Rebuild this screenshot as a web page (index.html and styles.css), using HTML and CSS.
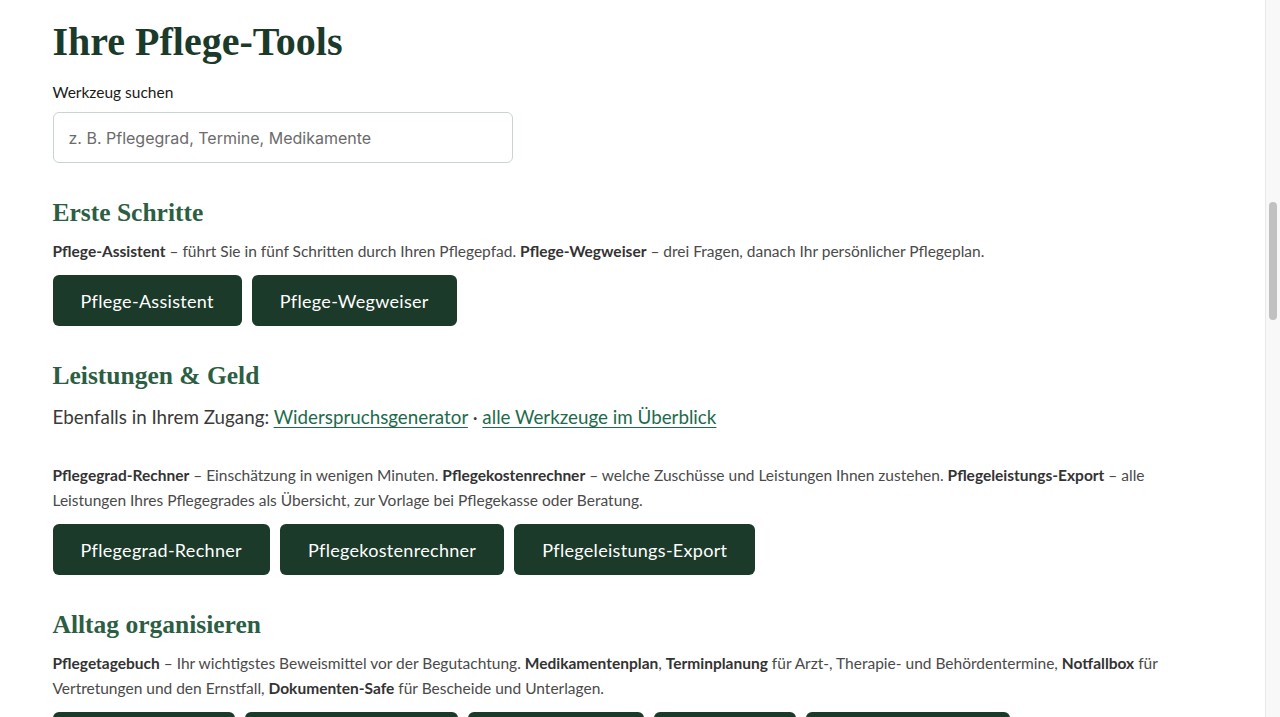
FILE: index.html
```html
<!DOCTYPE html>
<html lang="de">
<head>
<meta charset="utf-8">
<title>Ihre Pflege-Tools</title>
<link rel="stylesheet" href="styles.css">
</head>
<body>
<main class="page">
  <h1 class="title">Ihre Pflege-Tools</h1>
  <label class="search-label" for="tool-search">Werkzeug suchen</label>
  <input class="search-input" id="tool-search" type="search" placeholder="z. B. Pflegegrad, Termine, Medikamente">

  <section class="group">
    <h2 class="group-title">Erste Schritte</h2>
    <p class="group-text"><strong>Pflege-Assistent</strong> – führt Sie in fünf Schritten durch Ihren Pflegepfad. <strong>Pflege-Wegweiser</strong> – drei Fragen, danach Ihr persönlicher Pflegeplan.</p>
    <div class="btn-row">
      <a class="btn" href="#">Pflege-Assistent</a>
      <a class="btn" href="#">Pflege-Wegweiser</a>
    </div>
  </section>

  <section class="group">
    <h2 class="group-title">Leistungen &amp; Geld</h2>
    <p class="also">Ebenfalls in Ihrem Zugang: <a class="link" href="#">Widerspruchsgenerator</a> · <a class="link" href="#">alle Werkzeuge im Überblick</a></p>
    <p class="group-text spaced"><strong>Pflegegrad-Rechner</strong> – Einschätzung in wenigen Minuten. <strong>Pflegekostenrechner</strong> – welche Zuschüsse und Leistungen Ihnen zustehen. <strong>Pflegeleistungs-Export</strong> – alle Leistungen Ihres Pflegegrades als Übersicht, zur Vorlage bei Pflegekasse oder Beratung.</p>
    <div class="btn-row">
      <a class="btn" href="#">Pflegegrad-Rechner</a>
      <a class="btn" href="#">Pflegekostenrechner</a>
      <a class="btn" href="#">Pflegeleistungs-Export</a>
    </div>
  </section>

  <section class="group">
    <h2 class="group-title">Alltag organisieren</h2>
    <p class="group-text"><strong>Pflegetagebuch</strong> – Ihr wichtigstes Beweismittel vor der Begutachtung. <strong>Medikamentenplan</strong>, <strong>Terminplanung</strong> für Arzt-, Therapie- und Behördentermine, <strong>Notfallbox</strong> für Vertretungen und den Ernstfall, <strong>Dokumenten-Safe</strong> für Bescheide und Unterlagen.</p>
    <div class="btn-row">
      <a class="btn" href="#">Pflegetagebuch</a>
      <a class="btn" href="#">Medikamentenplan</a>
      <a class="btn" href="#">Terminplanung</a>
      <a class="btn" href="#">Notfallbox</a>
      <a class="btn" href="#">Dokumenten-Safe</a>
    </div>
  </section>
</main>
<div class="scrollbar" aria-hidden="true"><div class="scroll-thumb"></div></div>
</body>
</html>
```
FILE: styles.css
```css
html, body {
  margin: 0;
  padding: 0;
  background: #ffffff;
}
body {
  padding-right: 15px;
  font-family: "Lato", "Noto Sans", sans-serif;
  color: #444444;
}
.page {
  max-width: 1160px;
  margin: 0 auto;
  padding: 18px 0 60px;
  display: flex;
  flex-direction: column;
  align-items: flex-start;
}
.title {
  margin: 0;
  font-family: "Liberation Serif", serif;
  font-weight: 700;
  font-size: 40px;
  line-height: 48px;
  color: #1b3a2a;
}
.search-label {
  margin-top: 15px;
  font-size: 15.5px;
  line-height: 22px;
  color: #1a1a1a;
}
.search-input {
  margin-top: 9px;
  box-sizing: border-box;
  width: 460px;
  height: 51px;
  padding: 0 15px;
  border: 1px solid #c8d4d0;
  border-radius: 6px;
  font-family: "Inter", "Roboto", sans-serif;
  font-size: 16px;
  color: #222;
  background: #fff;
}
.search-input::placeholder {
  color: #6b6b6b;
}
.group {
  margin-top: 34px;
  display: flex;
  flex-direction: column;
  align-items: flex-start;
}
.group-title {
  margin: 0;
  font-family: "Liberation Serif", serif;
  font-weight: 700;
  font-size: 25.5px;
  line-height: 32px;
  color: #2c5e44;
}
.group-text {
  margin: 10px 0 11px;
  max-width: 1130px;
  font-size: 15.5px;
  line-height: 25px;
  color: #4a4a4a;
}
.group-text strong {
  font-weight: 700;
  color: #333333;
}
.group-text.spaced {
  margin-top: 33px;
}
.also {
  margin: 11px 0 0;
  font-size: 18.8px;
  line-height: 27px;
  color: #3a3a3a;
}
.link {
  color: #1e6a4d;
  text-decoration: underline;
  text-underline-offset: 3px;
}
.btn-row {
  display: flex;
  flex-wrap: wrap;
  gap: 10px;
}
.btn {
  display: inline-flex;
  align-items: center;
  height: 51px;
  padding: 0 28px;
  background: #1b3a2a;
  color: #ffffff;
  border-radius: 6px;
  font-size: 18px;
  letter-spacing: 0.3px;
  text-decoration: none;
}
.scrollbar {
  position: fixed;
  top: 0;
  right: 0;
  bottom: 0;
  width: 14px;
  background: #f8f8f8;
  border-left: 1px solid #e8e8e8;
}
.scroll-thumb {
  position: absolute;
  top: 202px;
  left: 3px;
  width: 8px;
  height: 118px;
  border-radius: 4px;
  background: #c1c1c1;
}
```
